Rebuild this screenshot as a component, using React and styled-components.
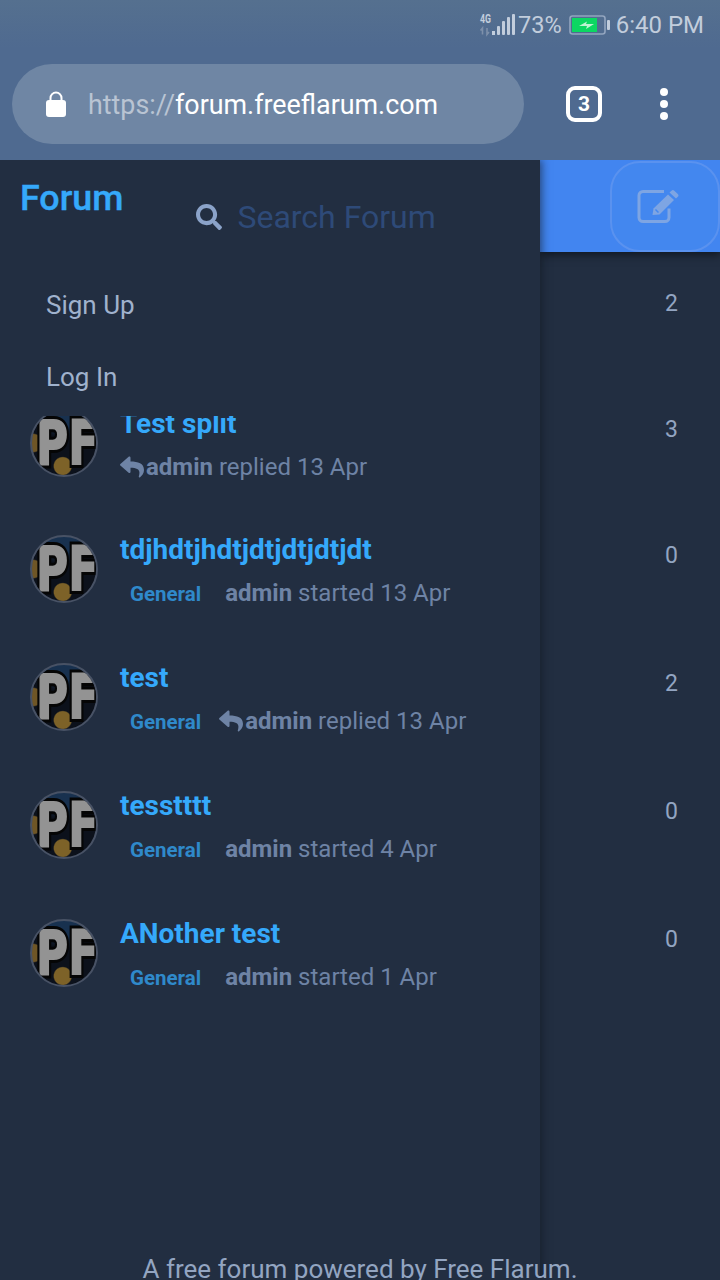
import React from 'react';
import styled, { createGlobalStyle } from 'styled-components';
import { FaSearch, FaReply } from 'react-icons/fa';

const Global = createGlobalStyle`
html, body {
    margin: 0;
    padding: 0;
    background: #222e41;
}
* { box-sizing: border-box; }
`;

const Page = styled.div`
position: relative;
width: 720px;
height: 1280px;
overflow: hidden;
display: flex;
flex-direction: column;
font-family: Roboto, "Liberation Sans", sans-serif;
background: #222e41;
`;

const Chrome = styled.div`
position: relative;
z-index: 3;
height: 160px;
flex: none;
display: flex;
flex-direction: column;
background: linear-gradient(180deg, #55708f 0%, #4f6a90 30%, #4f6a90 100%);
`;

const StatusBar = styled.div`
height: 50px;
padding-right: 16px;
display: flex;
align-items: center;
justify-content: flex-end;
color: #c2cddc;
font-size: 24px;
`;

const Percent = styled.span`
font-size: 23.5px;
margin: 0 7px 0 3px;
`;

const Clock = styled.span`
margin-left: 6px;
`;

const UrlRow = styled.div`
display: flex;
align-items: center;
padding: 14px 0 0 12px;
`;

const UrlPill = styled.div`
width: 512px;
height: 80px;
border-radius: 40px;
background: #6f86a4;
display: flex;
align-items: center;
padding-left: 34px;
font-size: 26.85px;
color: #fff;
`;

const UrlText = styled.span`
margin-left: 22px;
padding-top: 2px;
`;

const Scheme = styled.span`
color: #b9c4d3;
`;

const TabCount = styled.div`
width: 36px;
height: 36px;
margin-left: 42px;
border: 4px solid #fff;
border-radius: 9px;
display: flex;
align-items: center;
justify-content: center;
color: #fff;
font-size: 21px;
font-weight: 700;
`;

const Dots = styled.div`
margin-left: 58px;
display: flex;
flex-direction: column;
gap: 4px;
`;

const Dot = styled.i`
display: block;
width: 8px;
height: 8px;
border-radius: 50%;
background: #fff;
`;

const Body = styled.div`
flex: 1;
display: flex;
min-height: 0;
`;

const Drawer = styled.aside`
width: 540px;
flex: none;
position: relative;
z-index: 2;
background: #222e41;
box-shadow: 2px 0 8px rgba(15, 20, 30, 0.55);
display: flex;
flex-direction: column;
`;

const DrawerHead = styled.div`
display: flex;
height: 108px;
padding-left: 20px;
`;

const Brand = styled.div`
color: #35a9fb;
font-size: 35.8px;
font-weight: 500;
line-height: 40px;
padding-top: 18px;
-webkit-text-stroke: 0.4px #35a9fb;
`;

const Search = styled.div`
margin-left: 73px;
padding-top: 40px;
display: flex;
align-items: center;
height: 74px;
gap: 15px;
color: #2e4a78;
font-size: 32px;
svg { color: #8ba3c9; }
`;

const Nav = styled.nav`
display: flex;
flex-direction: column;
padding: 19px 0 0 46px;
height: 148px;
gap: 36px;
`;

const NavItem = styled.div`
color: #a0b2cd;
font-size: 26px;
line-height: 36px;
`;

const List = styled.div`
flex: 1;
min-height: 0;
overflow: hidden;
padding: 0 0 0 30px;
`;

const Row = styled.div`
height: 128px;
display: flex;
margin-top: ${props => props.$clipped ? "-16px" : "0"};
margin-bottom: ${props => props.$clipped ? "-2px" : "0"};
`;

const Avatar = styled.div`
width: 68px;
height: 68px;
margin-top: 9px;
flex: none;
border-radius: 50%;
border: 2px solid #485265;
overflow: hidden;
display: flex;
align-items: center;
justify-content: center;
background:
    radial-gradient(circle at 48% 86%, #7d6228 0 13%, transparent 15%),
    radial-gradient(circle at 2% 50%, #6f5626 0 12%, transparent 14%),
    radial-gradient(circle at 50% 0%, #18314f 0 22%, #0c111b 38%);
`;

const AvatarText = styled.span`
position: relative;
display: block;
left: 3px;
color: #939393;
font-family: "DejaVu Sans", sans-serif;
font-weight: 700;
font-size: 60px;
line-height: 60px;
letter-spacing: 1px;
transform: scaleX(0.72);
-webkit-text-stroke: 8px #050505;
paint-order: stroke fill;

&::after {
    content: "PF";
    position: absolute;
    left: 0;
    top: 0;
    -webkit-text-stroke: 2px #939393;
}
`;

const RowText = styled.div`
margin-left: 22px;
display: flex;
flex-direction: column;
`;

const Title = styled.div`
color: #35a9fb;
font-size: 28px;
font-weight: 700;
line-height: 36px;
margin-top: 6px;
`;

const Meta = styled.div`
display: flex;
align-items: center;
margin-top: 7px;
height: 36px;
color: #6e83a5;
font-size: 24px;
white-space: pre;
b { font-weight: 700; }
`;

const Tag = styled.span`
color: #2f89ca;
font-size: 20.5px;
font-weight: 700;
margin: 2px ${props => props.$tight ? "18px" : "24px"} 0 10px;
`;

const ReplyMark = styled(FaReply)`
width: 24px;
height: 24px;
margin-right: 2px;
color: #6e83a5;
`;

const Side = styled.div`
flex: 1;
display: flex;
flex-direction: column;
`;

const Hero = styled.div`
height: 92px;
flex: none;
background: #4285f0;
display: flex;
justify-content: flex-end;
align-items: center;
box-shadow: 0 3px 8px rgba(10, 14, 22, 0.7);
`;

const Compose = styled.div`
width: 110px;
height: 91px;
border-radius: 30px;
border: 2px solid #5a92ef;
background: #4387ef;
display: flex;
align-items: center;
padding-left: 25px;
color: #7ea5e3;
`;

const Counts = styled.div`
display: flex;
flex-direction: column;
padding-top: 33px;
color: #93a5c1;
font-size: 23px;
`;

const Count = styled.div`
height: ${props => props.$h || 128}px;
line-height: 38px;
padding-left: 125px;
`;

const Footer = styled.div`
position: absolute;
left: 0;
right: 0;
bottom: -5px;
z-index: 3;
text-align: center;
color: #93a5c1;
font-size: 26px;
line-height: 32px;
`;

const Signal = () => (
    <svg width="36" height="24" viewBox="0 0 36 24">
        <text x="1" y="10" fontSize="12" fontWeight="700" fontFamily="Roboto, sans-serif" textLength="11" lengthAdjust="spacingAndGlyphs" fill="#c2cddc">4G</text>
        <path d="M3.5 21.5v-6M1.5 17.5l2-2.5v6.5M8 15v6.5l2-2.5" fill="none" stroke="#7d90aa" strokeWidth="1.6" />
        <rect x="13" y="18" width="3" height="4" fill="#c2cddc" />
        <rect x="18" y="13" width="3" height="9" rx="1" fill="#c2cddc" />
        <rect x="23" y="8" width="3" height="14" rx="1" fill="#c2cddc" />
        <rect x="28" y="4" width="3" height="18" rx="1" fill="#c2cddc" />
        <rect x="33" y="1" width="3" height="21" rx="1" fill="#c2cddc" />
    </svg>
);

const Battery = () => (
    <svg width="41" height="20" viewBox="0 0 41 20">
        <rect x="1" y="1" width="35" height="18" rx="2.5" fill="none" stroke="#93a5bf" strokeWidth="1.6" />
        <rect x="3" y="3" width="25" height="14" fill="#0cd762" />
        <path d="M10 11 L18 6.5 L17 9 L25 9 L17 14 L18 11 Z" fill="#bdf3d2" />
        <rect x="38" y="5" width="3" height="10" rx="1" fill="#c2cddc" />
    </svg>
);

const Lock = () => (
    <svg width="20" height="26" viewBox="0 0 20 26">
        <path d="M4.5 10V7a5.5 5.5 0 0 1 11 0v3" fill="none" stroke="#fff" strokeWidth="2" />
        <rect x="0" y="9" width="20" height="17" rx="3" fill="#fff" />
    </svg>
);

const EditIcon = () => (
    <svg width="42" height="34" viewBox="0 0 42 34" fill="currentColor">
        <path d="M27 2.5H6a4 4 0 0 0-4 4v22a4 4 0 0 0 4 4h22a4 4 0 0 0 4-4v-9" fill="none" stroke="currentColor" strokeWidth="3" />
        <path d="M15.5 26 L16.5 19.5 L31 5.5 L37 11 L22.5 25.5 Z" />
        <path d="M32.5 3.5 L34.5 1.7 a2 2 0 0 1 2.8 0 L40.8 5 a2 2 0 0 1 0 2.8 L39 9.6 Z" />
        <path d="M18.5 20.5 L21.5 23.5" fill="none" stroke="#4387ef" strokeWidth="1.5" />
    </svg>
);

const rows = [
    { title: "Test split", reply: true, verb: "replied 13 Apr", clipped: true, noTag: true },
    { title: "tdjhdtjhdtjdtjdtjdtjdt", verb: "started 13 Apr" },
    { title: "test", reply: true, verb: "replied 13 Apr" },
    { title: "tesstttt", verb: "started 4 Apr" },
    { title: "ANother test", verb: "started 1 Apr" },
];

const App = () => {
    return <Page>
        <Global />
        <Chrome>
            <StatusBar>
                <Signal />
                <Percent>73%</Percent>
                <Battery />
                <Clock>6:40 PM</Clock>
            </StatusBar>
            <UrlRow>
                <UrlPill>
                    <Lock />
                    <UrlText><Scheme>https://</Scheme>forum.freeflarum.com</UrlText>
                </UrlPill>
                <TabCount>3</TabCount>
                <Dots><Dot /><Dot /><Dot /></Dots>
            </UrlRow>
        </Chrome>
        <Body>
            <Drawer>
                <DrawerHead>
                    <Brand>Forum</Brand>
                    <Search><FaSearch size={26} />Search Forum</Search>
                </DrawerHead>
                <Nav>
                    <NavItem>Sign Up</NavItem>
                    <NavItem>Log In</NavItem>
                </Nav>
                <List>
                    {rows.map(r => <Row key={r.title} $clipped={r.clipped}>
                        <Avatar><AvatarText>PF</AvatarText></Avatar>
                        <RowText>
                            <Title>{r.title}</Title>
                            <Meta>
                                {!r.noTag && <Tag $tight={r.reply}>General</Tag>}
                                {r.reply && <ReplyMark />}
                                <span><b>admin</b> {r.verb}</span>
                            </Meta>
                        </RowText>
                    </Row>)}
                </List>
            </Drawer>
            <Side>
                <Hero>
                    <Compose><EditIcon /></Compose>
                </Hero>
                <Counts>
                    <Count $h={126}>2</Count>
                    <Count $h={126}>3</Count>
                    <Count>0</Count>
                    <Count>2</Count>
                    <Count>0</Count>
                    <Count>0</Count>
                </Counts>
            </Side>
        </Body>
        <Footer>A free forum powered by Free Flarum.</Footer>
    </Page>;
};

export default App;
